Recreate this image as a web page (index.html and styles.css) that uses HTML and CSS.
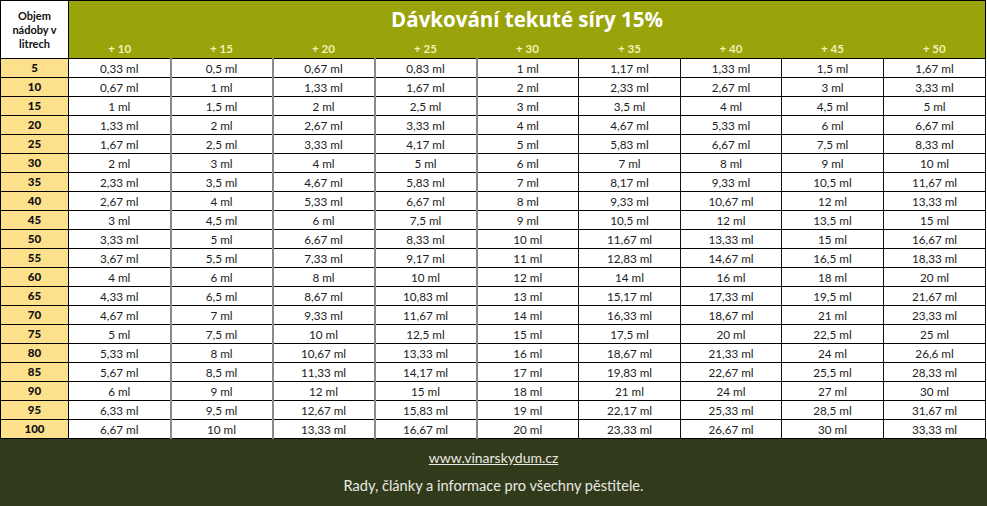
FILE: index.html
```html
<!DOCTYPE html>
<html lang="cs">
<head>
<meta charset="utf-8">
<title>Dávkování tekuté síry 15%</title>
<link rel="stylesheet" href="styles.css">
</head>
<body>
<div class="page">
<table class="dose">
<colgroup>
<col class="c-first"><col class="c-data"><col class="c-data"><col class="c-data"><col class="c-data"><col class="c-data"><col class="c-data"><col class="c-narrow"><col class="c-data"><col class="c-data">
</colgroup>
<thead>
<tr class="title-row">
<th class="corner" rowspan="2">Objem<br>nádoby v<br>litrech</th>
<th class="title" colspan="9">Dávkování tekuté síry 15%</th>
</tr>
<tr class="sub-row">
<th>+ 10</th><th>+ 15</th><th>+ 20</th><th>+ 25</th><th>+ 30</th><th>+ 35</th><th>+ 40</th><th>+ 45</th><th>+ 50</th>
</tr>
</thead>
<tbody>
<tr><th>5</th><td>0,33 ml</td><td>0,5 ml</td><td>0,67 ml</td><td>0,83 ml</td><td>1 ml</td><td>1,17 ml</td><td>1,33 ml</td><td>1,5 ml</td><td>1,67 ml</td></tr>
<tr><th>10</th><td>0,67 ml</td><td>1 ml</td><td>1,33 ml</td><td>1,67 ml</td><td>2 ml</td><td>2,33 ml</td><td>2,67 ml</td><td>3 ml</td><td>3,33 ml</td></tr>
<tr><th>15</th><td>1 ml</td><td>1,5 ml</td><td>2 ml</td><td>2,5 ml</td><td>3 ml</td><td>3,5 ml</td><td>4 ml</td><td>4,5 ml</td><td>5 ml</td></tr>
<tr><th>20</th><td>1,33 ml</td><td>2 ml</td><td>2,67 ml</td><td>3,33 ml</td><td>4 ml</td><td>4,67 ml</td><td>5,33 ml</td><td>6 ml</td><td>6,67 ml</td></tr>
<tr><th>25</th><td>1,67 ml</td><td>2,5 ml</td><td>3,33 ml</td><td>4,17 ml</td><td>5 ml</td><td>5,83 ml</td><td>6,67 ml</td><td>7,5 ml</td><td>8,33 ml</td></tr>
<tr><th>30</th><td>2 ml</td><td>3 ml</td><td>4 ml</td><td>5 ml</td><td>6 ml</td><td>7 ml</td><td>8 ml</td><td>9 ml</td><td>10 ml</td></tr>
<tr><th>35</th><td>2,33 ml</td><td>3,5 ml</td><td>4,67 ml</td><td>5,83 ml</td><td>7 ml</td><td>8,17 ml</td><td>9,33 ml</td><td>10,5 ml</td><td>11,67 ml</td></tr>
<tr><th>40</th><td>2,67 ml</td><td>4 ml</td><td>5,33 ml</td><td>6,67 ml</td><td>8 ml</td><td>9,33 ml</td><td>10,67 ml</td><td>12 ml</td><td>13,33 ml</td></tr>
<tr><th>45</th><td>3 ml</td><td>4,5 ml</td><td>6 ml</td><td>7,5 ml</td><td>9 ml</td><td>10,5 ml</td><td>12 ml</td><td>13,5 ml</td><td>15 ml</td></tr>
<tr><th>50</th><td>3,33 ml</td><td>5 ml</td><td>6,67 ml</td><td>8,33 ml</td><td>10 ml</td><td>11,67 ml</td><td>13,33 ml</td><td>15 ml</td><td>16,67 ml</td></tr>
<tr><th>55</th><td>3,67 ml</td><td>5,5 ml</td><td>7,33 ml</td><td>9,17 ml</td><td>11 ml</td><td>12,83 ml</td><td>14,67 ml</td><td>16,5 ml</td><td>18,33 ml</td></tr>
<tr><th>60</th><td>4 ml</td><td>6 ml</td><td>8 ml</td><td>10 ml</td><td>12 ml</td><td>14 ml</td><td>16 ml</td><td>18 ml</td><td>20 ml</td></tr>
<tr><th>65</th><td>4,33 ml</td><td>6,5 ml</td><td>8,67 ml</td><td>10,83 ml</td><td>13 ml</td><td>15,17 ml</td><td>17,33 ml</td><td>19,5 ml</td><td>21,67 ml</td></tr>
<tr><th>70</th><td>4,67 ml</td><td>7 ml</td><td>9,33 ml</td><td>11,67 ml</td><td>14 ml</td><td>16,33 ml</td><td>18,67 ml</td><td>21 ml</td><td>23,33 ml</td></tr>
<tr><th>75</th><td>5 ml</td><td>7,5 ml</td><td>10 ml</td><td>12,5 ml</td><td>15 ml</td><td>17,5 ml</td><td>20 ml</td><td>22,5 ml</td><td>25 ml</td></tr>
<tr><th>80</th><td>5,33 ml</td><td>8 ml</td><td>10,67 ml</td><td>13,33 ml</td><td>16 ml</td><td>18,67 ml</td><td>21,33 ml</td><td>24 ml</td><td>26,6 ml</td></tr>
<tr><th>85</th><td>5,67 ml</td><td>8,5 ml</td><td>11,33 ml</td><td>14,17 ml</td><td>17 ml</td><td>19,83 ml</td><td>22,67 ml</td><td>25,5 ml</td><td>28,33 ml</td></tr>
<tr><th>90</th><td>6 ml</td><td>9 ml</td><td>12 ml</td><td>15 ml</td><td>18 ml</td><td>21 ml</td><td>24 ml</td><td>27 ml</td><td>30 ml</td></tr>
<tr><th>95</th><td>6,33 ml</td><td>9,5 ml</td><td>12,67 ml</td><td>15,83 ml</td><td>19 ml</td><td>22,17 ml</td><td>25,33 ml</td><td>28,5 ml</td><td>31,67 ml</td></tr>
<tr><th>100</th><td>6,67 ml</td><td>10 ml</td><td>13,33 ml</td><td>16,67 ml</td><td>20 ml</td><td>23,33 ml</td><td>26,67 ml</td><td>30 ml</td><td>33,33 ml</td></tr>
</tbody>
</table>
<footer class="footer">
<a class="footer-link" href="#">www.vinarskydum.cz</a>
<p class="footer-text">Rady, články a informace pro všechny pěstitele.</p>
</footer>
</div>
</body>
</html>
```
FILE: styles.css
```css
html, body {
  margin: 0;
  padding: 0;
  background: #ffffff;
}

body {
  font-family: "Lato", "Liberation Sans", sans-serif;
  color: #1a1a1a;
  width: 987px;
  height: 506px;
  overflow: hidden;
}

.page {
  display: flex;
  flex-direction: column;
  height: 506px;
}

.dose {
  border-collapse: collapse;
  table-layout: fixed;
  width: 986px;
  border: 1px solid #000;
}

.c-first { width: 68px; }
.c-data { width: 102px; }
.c-narrow { width: 101px; }

.dose th,
.dose td {
  padding: 0;
  text-align: center;
  white-space: nowrap;
}

.title-row th.title {
  background: #99a30b;
  color: #ffffff;
  font-family: "Open Sans", "Lato", sans-serif;
  font-size: 20.5px;
  font-weight: 700;
  height: 34px;
  line-height: 34px;
  padding-top: 1px;
  box-sizing: border-box;
}

.corner {
  background: #ffffff;
  color: #111;
  font-size: 11px;
  font-weight: 700;
  line-height: 14px;
  padding-bottom: 2px;
  border-right: 1px solid #000;
  border-bottom: 1px solid #000;
}

.sub-row th {
  background: #99a30b;
  color: #f3f0b4;
  font-size: 11.5px;
  font-weight: 700;
  height: 22px;
  line-height: 19px;
  vertical-align: bottom;
  border-bottom: 1px solid #000;
}

.dose tbody tr {
  height: 19px;
}

.dose tbody th {
  background: #fde08c;
  font-size: 11.5px;
  font-weight: 900;
  color: #111;
  border-bottom: 1px solid #000;
  border-right: 1px solid #000;
  height: 18px;
  line-height: 18px;
}

.dose tbody td {
  font-size: 11.7px;
  color: #222;
  border-bottom: 1px solid #000;
  border-right: 1px solid #111;
  height: 18px;
  line-height: 18px;
}

.dose tbody td:nth-child(2),
.dose tbody td:nth-child(3),
.dose tbody td:nth-child(4),
.dose tbody td:nth-child(5) {
  border-right: 2px solid #8a8a8a;
}

.footer {
  flex: 1;
  background: #323a1c;
  color: #e9e9e2;
  display: flex;
  flex-direction: column;
  align-items: center;
  font-size: 14px;
  padding-top: 10px;
  gap: 11px;
}

.footer-link {
  color: #e9e9e2;
  text-decoration: underline;
  line-height: 17px;
}

.footer-text {
  margin: 0;
  font-size: 14.6px;
  line-height: 17px;
}
```
